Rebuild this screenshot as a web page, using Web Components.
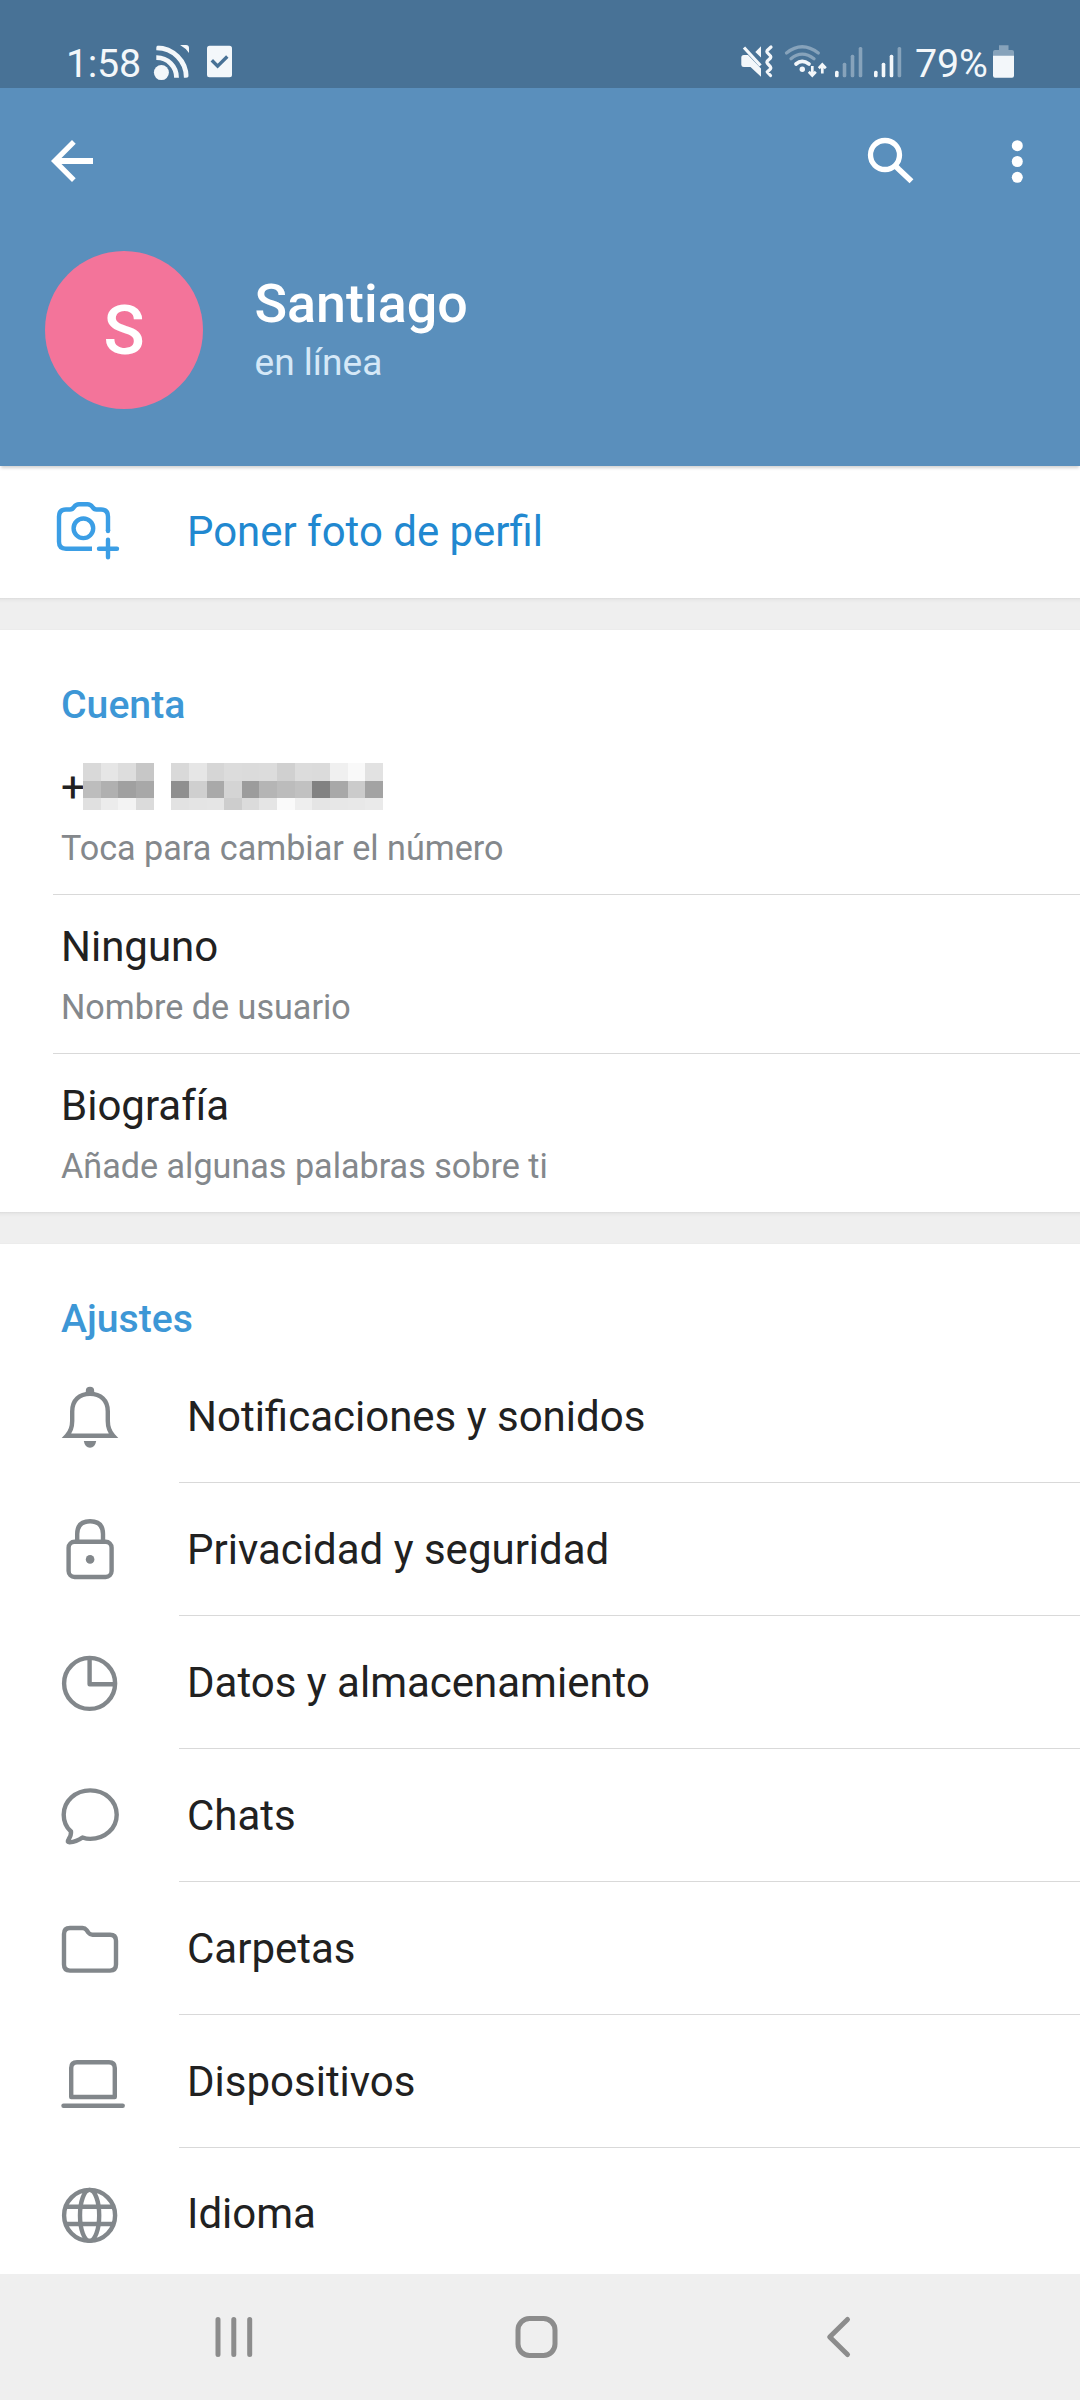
<!DOCTYPE html>
<html lang="es">
<head>
<meta charset="utf-8">
<title>Ajustes</title>
<style>
html,body{margin:0;padding:0;background:#fff}
body{width:1080px;height:2400px;overflow:hidden;font-family:Roboto,"Liberation Sans",sans-serif;color:#212121}
</style>
</head>
<body>
<settings-screen>
  <status-bar slot="top" time="1:58" battery="79%"></status-bar>
  <profile-header slot="top" initial="S"><span slot="name">Santiago</span><span slot="state">en línea</span></profile-header>
  <photo-action>Poner foto de perfil</photo-action>
  <section-gap></section-gap>
  <settings-section heading="Cuenta">
    <info-row><span>+</span><pixel-mask></pixel-mask><span slot="hint">Toca para cambiar el número</span></info-row>
    <info-row>Ninguno<span slot="hint">Nombre de usuario</span></info-row>
    <info-row last>Biografía<span slot="hint">Añade algunas palabras sobre ti</span></info-row>
  </settings-section>
  <section-gap></section-gap>
  <settings-section heading="Ajustes">
    <menu-row icon="bell">Notificaciones y sonidos</menu-row>
    <menu-row icon="lock">Privacidad y seguridad</menu-row>
    <menu-row icon="pie">Datos y almacenamiento</menu-row>
    <menu-row icon="chat">Chats</menu-row>
    <menu-row icon="folder">Carpetas</menu-row>
    <menu-row icon="laptop">Dispositivos</menu-row>
    <menu-row icon="globe" last>Idioma</menu-row>
  </settings-section>
  <nav-bar slot="bottom"></nav-bar>
</settings-screen>
<script>
function define(name, render) {
  customElements.define(name, class extends HTMLElement {
    constructor() {
      super();
      this.attachShadow({ mode: 'open' });
    }
    connectedCallback() {
      this.shadowRoot.innerHTML = render(this);
    }
  });
}

define('settings-screen', () => `
<style>
:host{display:flex;flex-direction:column;width:1080px;height:2400px;background:#fff}
main{flex:1;min-height:0;overflow:hidden}
</style>
<slot name="top"></slot><main><slot></slot></main><slot name="bottom"></slot>`);

define('status-bar', el => `
<style>
:host{display:flex;justify-content:space-between;height:88px;background:#487296;color:#f3f7fa;font-size:39.4px;line-height:50px}
div{display:flex;align-items:flex-start}
svg{display:block;flex:none}
span{padding-top:39px;white-space:nowrap}
.l{padding-left:66px}
.l span{width:82px;letter-spacing:-.3px}
.r{padding-right:60px}
.r span{width:76px;letter-spacing:-.2px}
</style>
<div class="l"><span>${el.getAttribute('time')}</span>
<svg width="92" height="88" viewBox="148 0 92 88">
<defs><clipPath id="c"><rect x="156.3" y="45" width="32.7" height="32.7" rx="3"/></clipPath></defs>
<g clip-path="url(#c)" fill="none" stroke="#f3f7fa" stroke-width="4.8"><circle cx="156.7" cy="77.5" r="19.8"/><circle cx="156.7" cy="77.5" r="29.6"/><path d="M177 43.5Q187.500 48 191 57L191 43Z" fill="#f3f7fa" stroke="none"/></g>
<circle cx="161.400" cy="72.600" r="9" fill="#487296"/><circle cx="161.400" cy="72.600" r="7.500" fill="#f3f7fa"/>
<rect x="207" y="45.700" width="25" height="31.500" rx="2.500" fill="#f3f7fa"/><path d="M211.800 60.300L217.600 66.200L227.300 56.500" fill="none" stroke="#487296" stroke-width="3.400"/>
</svg></div>
<div class="r">
<svg width="178" height="88" viewBox="737 0 178 88" fill="#f3f7fa">
<path d="M741.300 57.500Q741.300 55 743.800 55H748L761 68.500V76.700L750.500 67H743.800Q741.300 67 741.300 64.800ZM755.300 51.900L761 46.200V57.600Z"/>
<path d="M744 47.500L760.500 65.500" stroke="#f3f7fa" stroke-width="3.200"/>
<path d="M771 47L767.200 50.500Q766.500 51.500 767.200 52.500L770.500 56Q771.200 57 770.500 58L767.200 61.200Q766.500 62.200 767.200 63.200L770.500 66.800Q771.200 67.800 770.500 68.800L767.200 72L770.500 75.500" fill="none" stroke="#f3f7fa" stroke-width="3.200" stroke-linecap="round" stroke-linejoin="round"/>
<g fill="none" stroke-width="3.300" stroke-linecap="round"><path d="M786.500 53Q802 40.500 818.300 53M791 58.800Q802 49.500 814 58.800" stroke="#87a3bb"/><path d="M796 64Q802 58.700 809 64" stroke="#f3f7fa" stroke-width="3.700"/>
<path d="M812.300 66V74.500M808.800 71.800L812.300 75.500L815.800 71.800M822.300 73.500V65.500M818.800 68.200L822.300 64.500L825.800 68.200" stroke="#f3f7fa" stroke-width="2.700" stroke-linecap="butt"/></g>
<circle cx="802.300" cy="69.300" r="2.700"/>
<rect x="835" y="70.700" width="3.600" height="6.600" rx="1.500"/>
<g fill="#87a3bb"><rect x="842.700" y="62.700" width="3.600" height="14.600" rx="1.500"/><rect x="850.700" y="54.700" width="3.600" height="22.600" rx="1.500"/><rect x="858.700" y="47" width="3.600" height="30.300" rx="1.500"/><rect x="897.600" y="47" width="3.600" height="30.300" rx="1.500"/></g>
<rect x="874" y="70.700" width="3.600" height="6.600" rx="1.500"/><rect x="881.700" y="62.700" width="3.600" height="14.600" rx="1.500"/><rect x="889.700" y="54.700" width="3.600" height="22.600" rx="1.500"/>
</svg>
<span>${el.getAttribute('battery')}</span>
<svg width="29" height="88" viewBox="991 0 29 88"><path d="M999 45.300H1008.500V50H1012Q1014 50 1014 52V56H993V52Q993 50 995 50H999Z" fill="#87a3bb"/><path d="M993 55.700H1014V75.500Q1014 77.700 1012 77.700H995Q993 77.700 993 75.500Z" fill="#f3f7fa"/></svg>
</div>`);

define('profile-header', el => `
<style>
:host{display:block;height:378px;background:#5a8fbc;color:#fff;position:relative;z-index:1;box-shadow:0 3px 3px -1px rgba(0,0,0,.18)}
svg{display:block}
.bar{display:flex;justify-content:space-between;height:146px}
.who{display:flex;padding:17px 0 0 45px}
.av{width:158px;height:158px;border-radius:50%;background:#f3749a;font-weight:500;font-size:68px;line-height:160px;text-align:center}
.tx{padding:18px 0 0 51.5px}
.n{font-size:53.8px;font-weight:500;line-height:70px;white-space:nowrap}
.s{font-size:37.1px;line-height:44px;color:#d5e8f7;margin:2px 0 0 0}
</style>
<div class="bar">
<svg width="110" height="146" viewBox="0 88 110 146"><path transform="translate(40.500 129.500) scale(2.625)" fill="#fff" d="M20 10.850H8L13.420 5.410L12 4L4 12L12 20L13.410 18.590L8 13.150H20Z"/></svg>
<svg width="240" height="146" viewBox="840 88 240 146"><circle cx="885" cy="155" r="14.500" fill="none" stroke="#fff" stroke-width="5.300"/><path d="M896 166.500L898.500 169L911.500 181.300" stroke="#fff" stroke-width="5.600" fill="none"/><g fill="#fff"><circle cx="1017.300" cy="145.700" r="5.500"/><circle cx="1017.300" cy="161.500" r="5.500"/><circle cx="1017.300" cy="177.300" r="5.500"/></g></svg>
</div>
<div class="who"><div class="av">${el.getAttribute('initial')}</div><div class="tx"><div class="n"><slot name="name"></slot></div><div class="s"><slot name="state"></slot></div></div></div>`);

define('photo-action', () => `
<style>
:host{display:flex;height:132px;color:#2188d0;font-size:41.95px;line-height:132px;white-space:nowrap}
svg{display:block;margin:0 57px 0 50px}
</style>
<svg width="80" height="132" viewBox="50 466 80 132" fill="none" stroke="#3b9ee5" stroke-width="4.400" stroke-linecap="round" stroke-linejoin="round"><path d="M92 548.700H66Q59 548.700 59 541.700V516.500Q59 509.500 66 509.500H70Q72.500 509.500 74 507Q76 504.200 79 504.200H87.500Q90.500 504.200 92.500 507Q94 509.500 96.500 509.500H101Q108 509.500 108 516.500V531" stroke-linecap="butt"/><path d="M108 530V531"/><circle cx="83.400" cy="528.300" r="9.800"/><path d="M108 539.800V557.300M99 548.700H117"/></svg><slot></slot>`);

define('section-gap', () => `
<style>:host{display:block;height:32px;background:linear-gradient(#dcdcdc 0,#e9e9e9 2px,#efefef 5px,#efefef 31px,#e9e9e9 32px)}</style>`);

define('settings-section', el => `
<style>:host{display:block}
h2{margin:0;padding:44px 0 0 61px;height:62px;font-size:39.2px;font-weight:500;line-height:63px;color:#3d97d6}</style>
<h2>${el.getAttribute('heading')}</h2><slot></slot>`);

define('info-row', el => `
<style>
:host{display:block;height:${el.hasAttribute('last') ? 158 : 159}px;box-sizing:border-box;margin-left:53px;padding:27px 0 0 8px;${el.hasAttribute('last') ? '' : 'border-bottom:1px solid #d9d9d9'}}
.v{display:flex;height:50px;font-size:42px;line-height:50px}
.h{margin-top:15px;font-size:34.15px;line-height:40px;color:#84888c}
</style>
<div class="v"><slot></slot></div><div class="h"><slot name="hint"></slot></div>`);

const MASK = [
  ['d9 e6 dd c7', 'bd b0 a0 a8', 'e0 ec f3 db'],
  ['d9 e6 d6 dc db dc d0 dc db f0 f9 e2', '8f cf a9 d4 9c b5 bc c1 82 a8 cb a3', 'e2 e4 e5 cd db e5 fa ee e5 e7 e8 ea']
];
define('pixel-mask', () => `
<style>
:host{display:flex;gap:17px;margin-left:-2px}
.b{display:grid;grid-template-rows:18px 17px 12px;height:47px}
.b4{grid-template-columns:18px 17px 18px 18px}
.b12{grid-template-columns:18px 18px 17px 18px 17px 18px 18px 17px 18px 18px 17px 18px}
</style>` + MASK.map(rows => {
  const cells = rows.join(' ').split(' ');
  return `<div class="b b${cells.length / 3}">` + cells.map(c => `<i style="background:#${c}${c}${c}"></i>`).join('') + '</div>';
}).join(''));

const ICONS = {
  bell: '<path d="M66.800 1435.700Q72.200 1430 72.200 1421V1411.500C72.200 1400 79.500 1393.900 90 1393.900S107.800 1400 107.800 1411.500V1421Q107.800 1430 113.200 1435.700Z" stroke-linejoin="miter"/><path d="M85.800 1394V1391Q85.800 1386.800 90 1386.800T94.200 1391V1394ZM83.800 1441H96.200Q95 1447.700 90 1447.700T83.800 1441Z" fill="#82878b" stroke="none"/>',
  lock: '<rect x="68.600" y="1408.800" width="43" height="35.200" rx="6"/><path d="M77.200 1408V1401Q77.200 1388.300 90.100 1388.300T103 1401V1408"/><circle cx="90.100" cy="1426.400" r="4.300" fill="#82878b" stroke="none"/>',
  pie: '<circle cx="89.600" cy="1417.400" r="25.500"/><path d="M89.600 1392V1418.300H115"/>',
  chat: '<path d="M90.200 1391.400C105 1391.400 116.700 1402 116.700 1415.700S105 1439.900 90.200 1439.900Q86.500 1439.900 82.500 1438.500C79 1441 74 1443 69.500 1443.200Q66.500 1443.300 68.500 1440.500C70.500 1437.500 71.300 1435 71 1432.500C66.500 1428.500 63.700 1422.500 63.700 1415.700C63.700 1402 75.500 1391.400 90.200 1391.400Z"/>',
  folder: '<path d="M70 1396H82.500Q85 1396 86.500 1398L88.500 1400.800Q90 1402.800 92.500 1402.800H110Q116 1402.800 116 1408.800V1432.600Q116 1438.600 110 1438.600H70Q64 1438.600 64 1432.600V1402Q64 1396 70 1396Z"/>',
  laptop: '<path d="M71.200 1432V1403Q71.200 1397.300 77 1397.300H109Q114.800 1397.300 114.800 1403V1432Z"/><path d="M63.500 1440.700H122.700" stroke-linecap="round"/>',
  globe: '<circle cx="89.600" cy="1417.400" r="25.500"/><ellipse cx="89.600" cy="1417.400" rx="9.600" ry="25.500"/><path d="M66.500 1408.800H112.700M66.500 1426H112.700"/>'
};
define('menu-row', el => `
<style>
:host{display:flex;height:133px}
svg{display:block;flex:none;margin-left:50px}
div{flex:1;margin-left:49px;padding:${el.hasAttribute('last') ? 0 : 1}px 0 0 8px;height:131px;line-height:131px;font-size:42px;white-space:nowrap;border-bottom:1px solid ${el.hasAttribute('last') ? 'transparent' : '#d9d9d9'}}
</style>
<svg width="80" height="132" viewBox="50 1350 80 132" fill="none" stroke="#82878b" stroke-width="4.400" stroke-linejoin="round">${ICONS[el.getAttribute('icon')]}</svg><div><slot></slot></div>`);

define('nav-bar', () => `
<style>:host{display:flex;height:126px;background:#efefef;padding:0 206px 0 203px;justify-content:space-between;align-items:center}svg{display:block}</style>
<svg width="62" height="126" viewBox="203 2274 62 126" stroke="#8c8c8c" stroke-width="5" stroke-linecap="round"><path d="M218 2319.500V2354.500M233.800 2319.500V2354.500M249.700 2319.500V2354.500"/></svg>
<svg width="62" height="126" viewBox="507.500 2274 62 126" fill="none" stroke="#8c8c8c" stroke-width="5"><rect x="517.500" y="2318.500" width="37" height="37" rx="11.500"/></svg>
<svg width="62" height="126" viewBox="812 2274 62 126" fill="none" stroke="#8c8c8c" stroke-width="5" stroke-linecap="round" stroke-linejoin="round"><path d="M847.500 2319.500L829.700 2337L847.500 2354.500"/></svg>`);
</script>
</body>
</html>
